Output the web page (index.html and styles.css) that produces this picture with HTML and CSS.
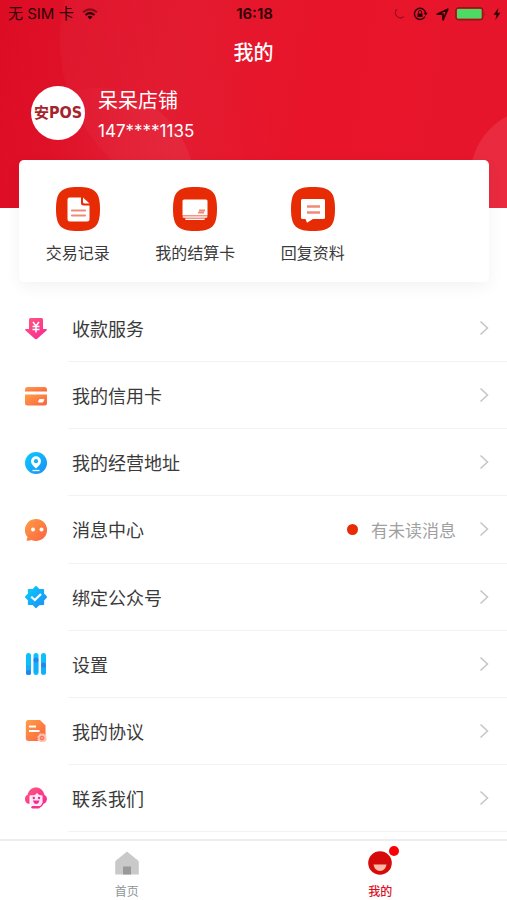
FILE: index.html
```html
<!DOCTYPE html>
<html lang="zh-CN">
<head>
<meta charset="utf-8">
<meta name="viewport" content="width=device-width, initial-scale=1">
<title>我的</title>
<link rel="stylesheet" href="styles.css">
</head>
<body>
<svg class="defs" width="0" height="0" aria-hidden="true">
  <defs>
    <linearGradient id="pink" x1="0" y1="0" x2="1" y2="1"><stop offset="0" stop-color="#ff5a78"/><stop offset="1" stop-color="#f8269a"/></linearGradient>
    <linearGradient id="orange" x1="0" y1="0" x2="1" y2="1"><stop offset="0" stop-color="#ff9e45"/><stop offset="1" stop-color="#fb6240"/></linearGradient>
    <linearGradient id="blue" x1="0" y1="0" x2="1" y2="1"><stop offset="0" stop-color="#08cdfb"/><stop offset="1" stop-color="#1f8df8"/></linearGradient>
    <symbol id="chevron" viewBox="0 0 10 16"><path d="M1.500 1.500 8.500 8l-7 6.500" fill="none" stroke="#c6c6c6" stroke-width="1.600"/></symbol>
  </defs>
</svg>
<header class="hero">
  <svg class="hero-art" width="507" height="208" viewBox="0 0 507 208" preserveAspectRatio="none" aria-hidden="true">
    <defs>
      <linearGradient id="fade1" x1="0" y1="0.500" x2="1" y2="0.300"><stop offset="0" stop-color="#fff" stop-opacity=".03"/><stop offset=".6" stop-color="#fff" stop-opacity="0"/></linearGradient>
      <linearGradient id="fade2" x1="0.250" y1="0" x2="1" y2="0"><stop offset="0" stop-color="#fff" stop-opacity="0"/><stop offset="1" stop-color="#fff" stop-opacity=".06"/></linearGradient>
    </defs>
    <circle cx="225" cy="40" r="165" fill="url(#fade1)"/>
    <circle cx="95" cy="188" r="100" fill="url(#fade2)"/>
    <circle cx="540" cy="178" r="70" fill="#fff" fill-opacity=".09"/>
  </svg>
  <div class="status">
    <div class="status-side">
      <span>无 SIM 卡</span>
      <svg width="16" height="12" viewBox="0 0 16 12" fill="none" stroke="#2b0206" stroke-width="2"><path d="M1 4.300Q8-1.500 15 4.300" stroke-opacity=".5"/><path d="M3.500 7Q8 3.300 12.500 7"/><path d="M5.500 8.700Q8 6.800 10.500 8.700L8 11.500Z" fill="#2b0206" stroke="none"/></svg>
    </div>
    <time class="clock">16:18</time>
    <div class="status-side status-right">
      <svg width="11" height="12" viewBox="0 0 11 12"><path d="M3 1A4.500 4.500 0 0 0 10 8.500 5 5 0 1 1 3 1Z" fill="#8f0c1c" stroke="#8f0c1c" stroke-width=".8" stroke-linejoin="round"/></svg>
      <svg class="lock" width="15" height="14" viewBox="0 0 15 14"><path d="M12 9.500A5.600 5.600 0 1 1 12.600 6" fill="none" stroke="#2b0206" stroke-width="1.400"/><path d="M10.500 5.800h4.300l-2.100 2.900z" fill="#2b0206"/><path d="M4.500 6.500h5v3.500h-5z" fill="#2b0206"/><path d="M5.500 6.500V5a1.500 1.500 0 0 1 3 0v1.500" fill="none" stroke="#2b0206"/></svg>
      <svg width="13" height="13" viewBox="0 0 13 13"><path d="M1.200 6.200 11.800 1.200 7 11.800V6.200Z" fill="none" stroke="#2b0206" stroke-width="1.700" stroke-linejoin="round"/></svg>
      <svg width="32" height="14" viewBox="0 0 32 14"><rect x=".8" y=".8" width="27" height="12" rx="3" fill="none" stroke="#8a1c18" stroke-width="1.400"/><rect x="2" y="2" width="24.600" height="9.600" rx="1" fill="#4cd964"/><path d="M29.500 5q1.500 2 0 4z" fill="#8a1c18"/></svg>
      <svg width="8" height="12" viewBox="0 0 8 12"><path d="M5.500 0 .5 6.800H3.600L2.300 12 7.500 4.800H4.400Z" fill="#2b0206"/></svg>
    </div>
  </div>
  <h1 class="title">我的</h1>
  <div class="profile">
    <div class="avatar"><span class="avatar-cn">安</span><span class="avatar-en">POS</span></div>
    <div>
      <div class="shop">呆呆店铺</div>
      <div class="phone">147****1135</div>
    </div>
  </div>
</header>
<main class="content">
  <nav class="card" aria-label="快捷入口">
    <a class="quick" href="#records">
      <svg width="44" height="44" viewBox="0 0 44 44"><path d="M22 0C39 0 44 5 44 22S39 44 22 44 0 39 0 22 5 0 22 0Z" fill="#e62b05"/><path d="M13.500 10.500H25V16q0 2.500 2.500 2.500h6V32q0 2.500-2.500 2.500H14q-2.500 0-2.500-2.500V12.500q0-2 2-2Z" fill="#fff"/><path d="M27 10.500l6.500 6h-5q-1.500 0-1.500-1.500Z" fill="#fff"/><path d="M16 23.500h13M16 28.500h13" stroke="#f08a77" stroke-width="2.200" stroke-linecap="round"/></svg>
      <span>交易记录</span>
    </a>
    <a class="quick" href="#settlement">
      <svg width="44" height="44" viewBox="0 0 44 44"><path d="M22 0C39 0 44 5 44 22S39 44 22 44 0 39 0 22 5 0 22 0Z" fill="#e62b05"/><path d="M11 12.500h22q1.500 0 1.500 1.500v14.500h-25V14q0-1.500 1.500-1.500Z" fill="#fff"/><path d="M9.500 29.300h25q0 1.500-1.500 1.500H11q-1.500 0-1.500-1.500ZM12 31.500h20q0 1.500-1.500 1.500h-17q-1.500 0-1.500-1.500Z" fill="#fff"/><path d="M26 23.500h6M25 25.700h6" stroke="#f08a77" stroke-width="1.800"/></svg>
      <span>我的结算卡</span>
    </a>
    <a class="quick" href="#reply">
      <svg width="44" height="44" viewBox="0 0 44 44"><path d="M22 0C39 0 44 5 44 22S39 44 22 44 0 39 0 22 5 0 22 0Z" fill="#e62b05"/><path d="M11.500 12h21q1.500 0 1.500 1.500v17q0 1.500-1.500 1.500H22L16 35.800 14.500 32h-3q-1.500 0-1.500-1.500v-17q0-1.500 1.500-1.500Z" fill="#fff"/><path d="M16 19.500h13M16 25.500h13" stroke="#f08a77" stroke-width="2.500"/></svg>
      <span>回复资料</span>
    </a>
  </nav>
  <nav class="menu" aria-label="菜单">
    <a class="row" href="#collect">
      <svg class="icon" viewBox="0 0 22 22"><path d="M5.500 0h11q1.500 0 1.500 1.500V11h3q1.500.2.500 1.500L12.500 20.500Q11 21.800 9.500 20.500L.5 12.500Q-.5 11.200 1 11H4V1.500Q4 0 5.500 0Z" fill="url(#pink)"/><path d="M8 4l3 4 3-4M11 8v6.500M7.500 8.500h7M7.500 11.500h7" fill="none" stroke="#fff" stroke-width="1.500"/></svg>
      <span class="body"><span class="label">收款服务</span><svg class="chev"><use href="#chevron"/></svg></span>
    </a>
    <a class="row" href="#credit">
      <svg class="icon" viewBox="0 0 22 22"><path d="M2.500 2h17Q22 2 22 5v1.500H0V5Q0 2 2.500 2Z" fill="url(#orange)"/><path d="M0 9.500h22v8.500q0 2.500-2.500 2.500h-17Q0 20.500 0 18Z" fill="url(#orange)"/><path d="M14.500 14.500h4.300l-1 2.500h-4.300Z" fill="#fff" stroke="#fff" stroke-linejoin="round"/></svg>
      <span class="body"><span class="label">我的信用卡</span><svg class="chev"><use href="#chevron"/></svg></span>
    </a>
    <a class="row" href="#address">
      <svg class="icon" viewBox="0 0 22 22"><circle cx="11" cy="11" r="11" fill="url(#blue)"/><path d="M11 4.200a5 5 0 0 1 5 5c0 2.800-2.500 4.800-5 7.300-2.500-2.500-5-4.500-5-7.300a5 5 0 0 1 5-5Z" fill="#fff"/><circle cx="11" cy="9.200" r="2.100" fill="#13b3fa"/><path d="M7.500 18.500h7" stroke="#fff" stroke-width="1.300"/></svg>
      <span class="body"><span class="label">我的经营地址</span><svg class="chev"><use href="#chevron"/></svg></span>
    </a>
    <a class="row" href="#messages">
      <svg class="icon" viewBox="0 0 22 22"><path d="M11 0a11 11 0 1 1-4.500 21Q3.500 22 1.500 21.500L2.500 18A11 11 0 0 1 11 0Z" fill="url(#orange)"/><circle cx="8" cy="10.500" r="2" fill="#fff"/><circle cx="16.500" cy="10.500" r="2" fill="#fff"/></svg>
      <span class="body"><span class="label">消息中心</span><span class="unread">有未读消息</span><svg class="chev"><use href="#chevron"/></svg></span>
    </a>
    <a class="row" href="#official">
      <svg class="icon" viewBox="0 0 22 22"><path d="M11 1l2.900 3 4.200-.1.100 4L21 11l-2.900 3 .1 4.100-4.300.1L11 21l-2.900-2.900-4.300-.1.100-4.100L1 11l2.900-3-.1-4.100 4.300.1Z" fill="url(#blue)" stroke="url(#blue)" stroke-width="2" stroke-linejoin="round"/><path d="M6.200 10.800 9.800 14 16 8" fill="none" stroke="#fff" stroke-width="2.200"/></svg>
      <span class="body"><span class="label">绑定公众号</span><svg class="chev"><use href="#chevron"/></svg></span>
    </a>
    <a class="row" href="#settings">
      <svg class="icon" viewBox="0 0 22 22"><g fill="#0cc0fa"><rect x="1" width="5" height="22" rx="2.500"/><rect x="8.500" width="5" height="22" rx="2.500"/><rect x="16" width="5" height="22" rx="2.500"/></g><g fill="#2783f4"><rect x="1" y="12" width="5" height="10" rx="2.500" opacity=".3"/><circle cx="3.500" cy="19.500" r="2.500"/><circle cx="11" cy="7" r="2.500"/><rect x="8.500" y="7" width="5" height="13" rx="2.500" opacity=".3"/><circle cx="18.500" cy="12" r="2.500"/><rect x="16" y="12" width="5" height="9" rx="2.500" opacity=".3"/></g></svg>
      <span class="body"><span class="label">设置</span><svg class="chev"><use href="#chevron"/></svg></span>
    </a>
    <a class="row" href="#agreement">
      <svg class="icon" viewBox="0 0 22 22"><path d="M3.500 0H15l5.500 5.500V21H3.500Q.8 21 .8 18V3Q.8 0 3.500 0Z" fill="url(#orange)"/><path d="M4 6.500h7M4 11h10.500" stroke="#fff" stroke-width="1.800"/><circle cx="17" cy="18" r="4" fill="#ffc3b2"/><circle cx="17" cy="18" r="4" fill="none" stroke="#ffc3b2" stroke-width="1.500" stroke-dasharray="2 1.140"/><circle cx="17" cy="18" r="1.900" fill="#ff9d88" stroke="#f9674a"/></svg>
      <span class="body"><span class="label">我的协议</span><svg class="chev"><use href="#chevron"/></svg></span>
    </a>
    <a class="row" href="#contact">
      <svg class="icon" viewBox="0 0 22 22"><path d="M2.500 8C4 2.500 7 .5 11 .5S18 2.500 19.500 8Q22 9 22 12t-3 4.800h-1.500V8.500h-13v8.300H3Q0 15.500 0 12t2.500-4Z" fill="url(#pink)"/><path d="M5.500 8.500Q10 9 12 6q2 2.500 5 3V16q0 2.500-2.500 2.500h-6Q5.500 18.500 5.500 16Z" fill="#ffe8f1"/><path d="M17.800 16q-.5 3.800-5.300 4.300" fill="none" stroke="#f8308f" stroke-width="1.400"/><path d="M7.500 20.300h6" stroke="#f8308f" stroke-width="2.400" stroke-linecap="round"/><circle cx="8.800" cy="11" r="1.200" fill="#e9309a"/><circle cx="14" cy="11" r="1.200" fill="#e9309a"/><path d="M8 13.500h6.500Q13.500 17 11.200 17T8 13.500Z" fill="#e9309a"/></svg>
      <span class="body"><span class="label">联系我们</span><svg class="chev"><use href="#chevron"/></svg></span>
    </a>
  </nav>
</main>
<nav class="tabs" aria-label="主导航">
  <a class="tab" href="#home">
    <svg width="24" height="24" viewBox="0 0 24 24"><path d="M12 .5 23 9.500q.8.700.8 2V23.500H.2V11.500q0-1.300.8-2Z" fill="#c9c9c9"/><path d="M8 15.500h8v8H8z" fill="#999"/></svg>
    <span>首页</span>
  </a>
  <a class="tab active" href="#me" aria-current="page">
    <span class="badge-box"><svg width="24" height="24" viewBox="0 0 24 24"><circle cx="12" cy="12" r="11.800" fill="#d50b0b"/><path d="M5.500 13.500h13Q17.500 20 12 20T5.500 13.500Z" fill="#ffb9a5"/></svg></span>
    <span>我的</span>
  </a>
</nav>
</body>
</html>
```
FILE: styles.css
```css
* {
  box-sizing: border-box;
}

body {
  margin: 0;
  min-height: 100vh;
  display: flex;
  flex-direction: column;
  background: #fff;
  color: #3a3a3a;
  font-family: "Inter", "Noto Sans CJK SC", sans-serif;
}

a {
  color: inherit;
  text-decoration: none;
}

svg {
  display: block;
  flex: none;
}

.defs {
  position: absolute;
}

.hero {
  position: relative;
  height: 208px;
  color: #fff;
  background: linear-gradient(100deg, #dc0c24 0%, #e3182e 35%, #e8152a 60%, #e7152c 100%);
}

.hero-art {
  position: absolute;
  inset: 0;
  width: 100%;
  height: 100%;
}

.status,
.title,
.profile {
  position: relative;
}

.status {
  display: flex;
  align-items: center;
  height: 28px;
  padding: 0 6px 0 8px;
  color: #2b0206;
  font-size: 15px;
  line-height: 20px;
}

.status-side {
  flex: 1;
  display: flex;
  align-items: center;
  gap: 8px;
}

.status-right {
  justify-content: flex-end;
  gap: 6px;
}

.status-right .lock {
  margin: 0 2px;
}

.clock {
  font-weight: 600;
}

.title {
  margin: 9px 0 0;
  font-size: 20px;
  line-height: 32px;
  font-weight: 500;
  text-align: center;
}

.profile {
  display: flex;
  align-items: center;
  gap: 13px;
  padding: 16px 31px 0;
}

.avatar {
  display: flex;
  align-items: center;
  justify-content: center;
  width: 54px;
  height: 54px;
  margin-bottom: 4px;
  border-radius: 50%;
  background: #fff;
  color: #a6232b;
  font-weight: 700;
  line-height: 20px;
}

.avatar-cn {
  font-size: 15px;
}

.avatar-en {
  font-family: "DejaVu Sans Condensed", "DejaVu Sans", sans-serif;
  font-size: 16px;
}

.shop {
  font-size: 20px;
  line-height: 32px;
}

.phone {
  font-size: 17px;
  line-height: 28px;
}

.content {
  flex: 1;
  display: flex;
  flex-direction: column;
}

.card {
  position: relative;
  display: flex;
  margin: -48px 18px 0 19px;
  padding: 27px 0 16px;
  border-radius: 5px;
  background: #fff;
  box-shadow: 0 5px 16px rgba(0, 0, 0, 0.05);
}

.quick {
  width: 25%;
  display: flex;
  flex-direction: column;
  align-items: center;
  gap: 10px;
  font-size: 16px;
  line-height: 25px;
  white-space: nowrap;
}

.menu {
  flex: 1;
  display: flex;
  flex-direction: column;
  margin: 13px 0 7px;
}

.row {
  flex: 1;
  display: flex;
  align-items: center;
  min-height: 60px;
  padding-left: 25px;
}

.icon {
  width: 22px;
  height: 22px;
}

.body {
  flex: 1;
  align-self: stretch;
  display: flex;
  align-items: center;
  margin-left: 21px;
  padding: 0 18px 0 4px;
  border-bottom: 1px solid #f2f2f2;
}

.label {
  flex: 1;
  font-size: 18px;
}

.unread {
  display: flex;
  align-items: center;
  gap: 13px;
  margin-right: 23px;
  color: #a0a0a0;
  font-size: 17px;
}

.unread::before {
  content: "";
  width: 11px;
  height: 11px;
  border-radius: 50%;
  background: #e62b05;
}

.chev {
  width: 10px;
  height: 16px;
}

.tabs {
  display: flex;
  height: 61px;
  padding-top: 10px;
  border-top: 2px solid #ededed;
}

.tab {
  flex: 1;
  display: flex;
  flex-direction: column;
  align-items: center;
  gap: 8px;
  color: #8e9497;
  font-size: 12px;
  line-height: 18px;
}

.active {
  color: #d8131f;
  font-weight: 500;
}

.badge-box {
  position: relative;
}

.badge-box::after {
  content: "";
  position: absolute;
  top: -5px;
  right: -7px;
  width: 10px;
  height: 10px;
  border-radius: 50%;
  background: #fb0007;
}
```
